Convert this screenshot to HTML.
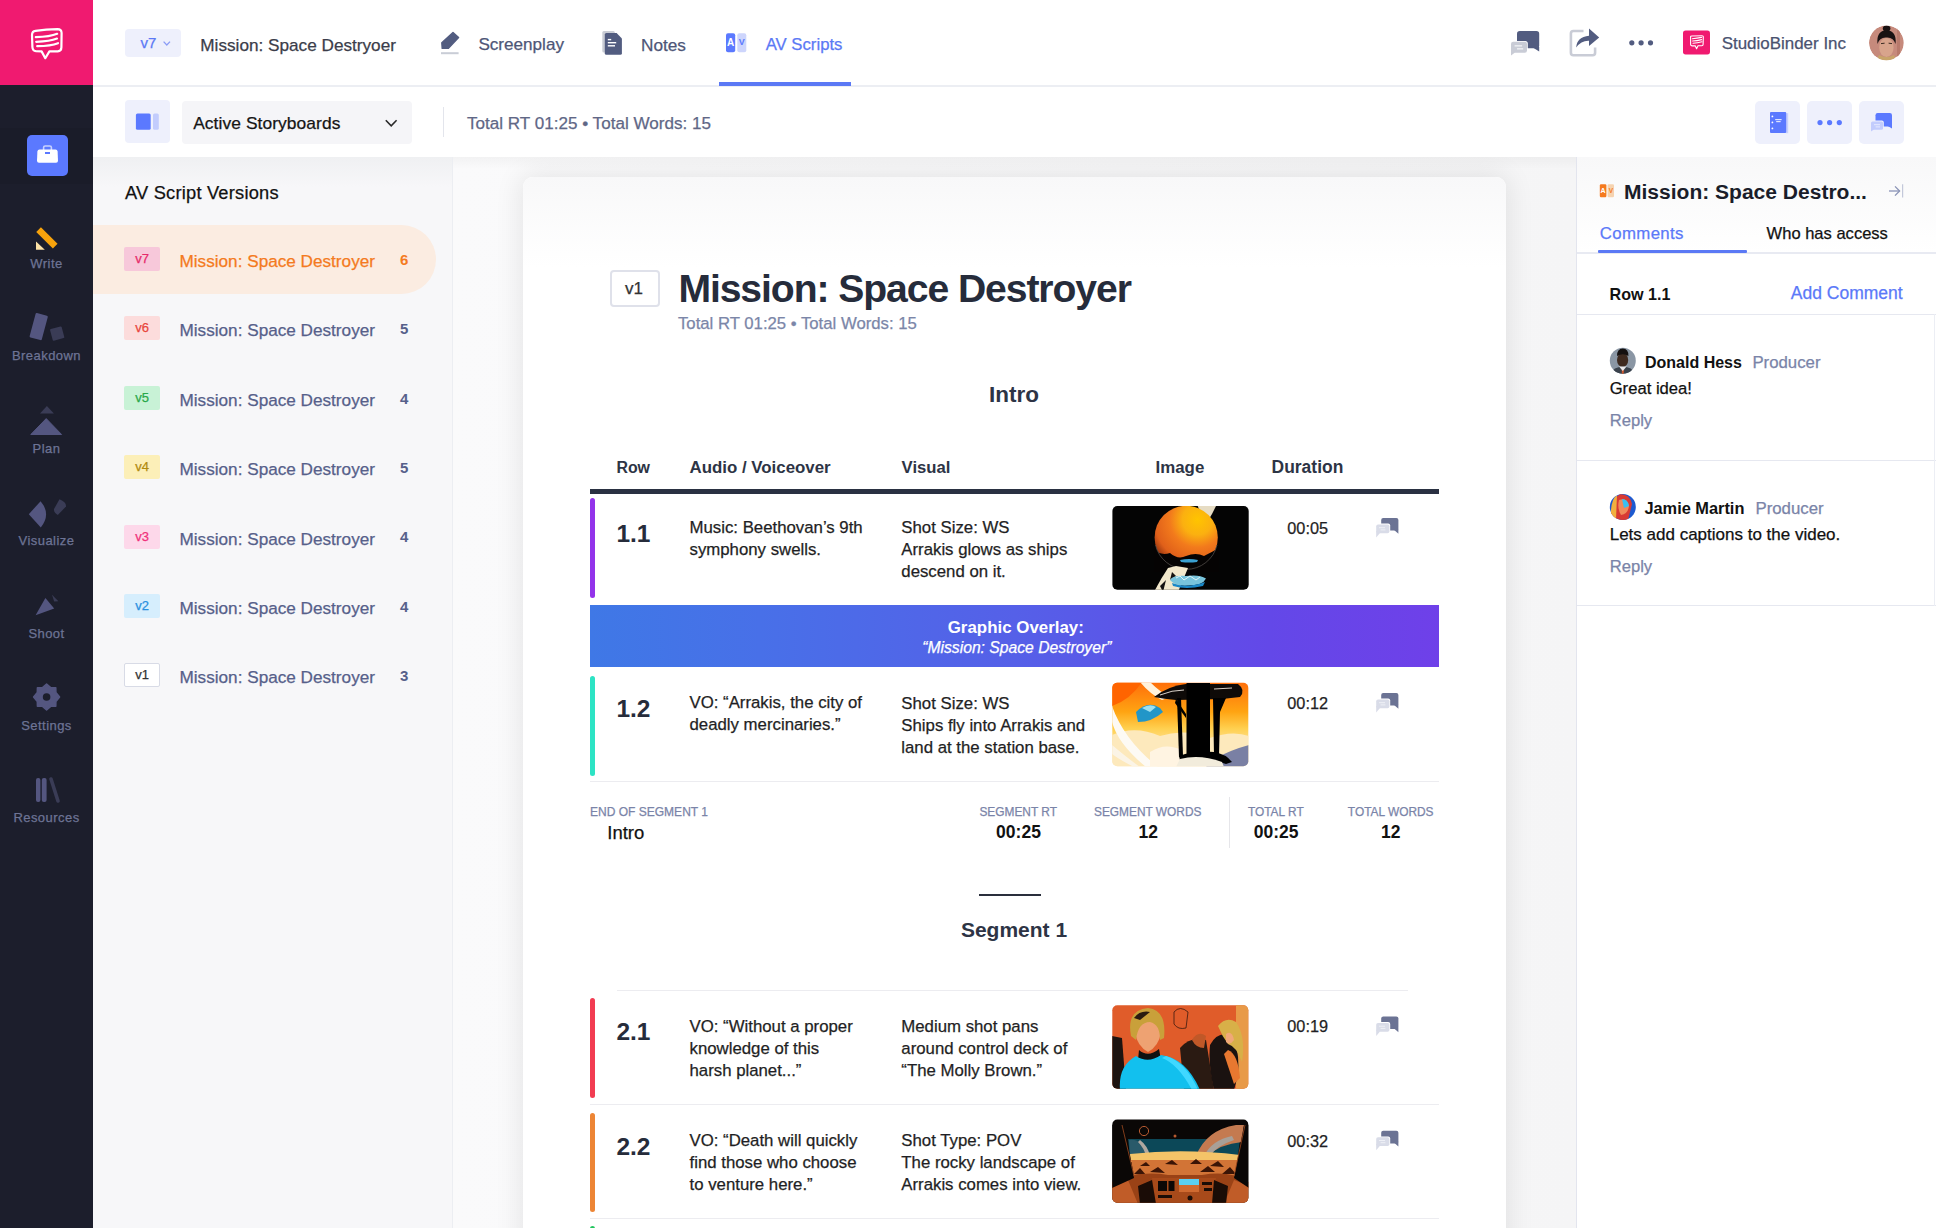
<!DOCTYPE html>
<html><head><meta charset="utf-8"><style>
*{box-sizing:border-box;margin:0;padding:0}
html,body{width:1936px;height:1228px;overflow:hidden;background:#fff}
body{position:relative;font-family:'Liberation Sans',sans-serif}
.t{position:absolute;white-space:pre}
.r{-webkit-text-stroke:0.25px currentColor}
.a{position:absolute}
svg{position:absolute;overflow:visible}

</style></head><body>
<!-- sidebar -->
<div class=a style="left:0;top:0;width:93px;height:1228px;background:#1c1e2c"></div>
<div class=a style="left:0;top:128px;width:93px;height:56px;background:#1a1c29"></div>
<div class=a style="left:0;top:0;width:93px;height:85px;background:#f01a70"></div>
<!-- header / toolbar -->
<div class=a style="left:93px;top:85px;width:1843px;height:2px;background:#eceef3"></div>
<div class=a style="left:719px;top:82px;width:132px;height:4px;background:#5b79f5"></div>
<!-- left panel -->
<div class=a style="left:93px;top:157px;width:359px;height:1071px;background:#f7f7f9"></div>
<div class=a style="left:93px;top:157px;width:359px;height:30px;background:linear-gradient(#eff0f2,rgba(247,247,249,0))"></div>
<div class=a style="left:452px;top:157px;width:1px;height:1071px;background:#eceef2"></div>
<div class=a style="left:93px;top:225px;width:343px;height:69px;background:#fbece1;border-radius:0 34.5px 34.5px 0"></div>
<!-- main area -->
<div class=a style="left:453px;top:157px;width:1123px;height:1071px;background:linear-gradient(90deg,#fafafb,#f5f5f6);overflow:hidden">
<div class=a style="left:70px;top:20px;width:983px;height:1100px;border-radius:10px;box-shadow:0 0 28px 2px rgba(0,0,0,0.09)"></div>
</div>
<div class=a style="left:523px;top:177px;width:983px;height:1100px;background:#fff;border-radius:10px"></div>
<div class=a style="left:523px;top:177px;width:983px;height:90px;border-radius:10px 10px 0 0;background:linear-gradient(#f8f8f9,#fff)"></div>
<div class=a style="left:453px;top:157px;width:1123px;height:12px;background:linear-gradient(rgba(0,0,0,0.03),rgba(0,0,0,0))"></div>
<!-- right panel -->
<div class=a style="left:1576px;top:157px;width:360px;height:1071px;background:#fff;border-left:1px solid #e3e5ee"></div>
<div class=a style="left:1577px;top:157px;width:359px;height:96px;background:linear-gradient(#f8f8f9,#fff)"></div>
<div class=a style="left:1577px;top:252px;width:359px;height:2px;background:#e8eaf2"></div>
<div class=a style="left:1598px;top:250px;width:149px;height:3px;background:#5b79f5;border-radius:1px"></div>
<div class=a style="left:1577px;top:314px;width:359px;height:1px;background:#e6e8f0"></div>
<div class=a style="left:1577px;top:460px;width:359px;height:1px;background:#e6e8f0"></div>
<div class=a style="left:1577px;top:605px;width:359px;height:1px;background:#e6e8f0"></div>
<div class=a style="left:1934px;top:314px;width:1px;height:292px;background:#eceef4"></div>
<!-- toolbar elements -->
<div class=a style="left:125px;top:29px;width:56px;height:28px;background:#eef0fc;border-radius:4px"></div>
<div class=a style="left:125px;top:100px;width:45px;height:43px;background:#eef0fc;border-radius:4px"></div>
<div class=a style="left:182px;top:101px;width:230px;height:43px;background:#f5f5f8;border-radius:4px"></div>
<div class=a style="left:443px;top:107px;width:1px;height:30px;background:#e3e5ec"></div>
<div class=a style="left:1755px;top:101px;width:45px;height:43px;background:#eef0fc;border-radius:5px"></div>
<div class=a style="left:1807px;top:101px;width:45px;height:43px;background:#eef0fc;border-radius:5px"></div>
<div class=a style="left:1859px;top:101px;width:45px;height:43px;background:#eef0fc;border-radius:5px"></div>
<div class=a style="left:27px;top:135px;width:41px;height:41px;background:#5b79ff;border-radius:5px"></div>
<!-- version chips -->
<div class=a style="left:124px;top:247px;width:36px;height:24px;background:#f7c8da;border-radius:2px"></div>
<div class=a style="left:124px;top:316.4px;width:36px;height:24px;background:#fcdcdc;border-radius:2px"></div>
<div class=a style="left:124px;top:385.8px;width:36px;height:24px;background:#c8f2d6;border-radius:2px"></div>
<div class=a style="left:124px;top:455.2px;width:36px;height:24px;background:#fcefb8;border-radius:2px"></div>
<div class=a style="left:124px;top:524.6px;width:36px;height:24px;background:#fdd8ea;border-radius:2px"></div>
<div class=a style="left:124px;top:594px;width:36px;height:24px;background:#d6eefd;border-radius:2px"></div>
<div class=a style="left:124px;top:663.4px;width:36px;height:24px;background:#fff;border:1px solid #d8dbe6;border-radius:2px"></div>
<!-- card content -->
<div class=a style="left:610px;top:269.5px;width:50px;height:37px;background:#fff;border:2px solid #dfe1ea;border-radius:4px"></div>
<div class=a style="left:590px;top:489px;width:849px;height:5px;background:#2a3142"></div>
<div class=a style="left:590px;top:498px;width:5px;height:100px;background:#9333ea;border-radius:3px"></div>
<div class=a style="left:590px;top:605px;width:849px;height:62px;background:linear-gradient(90deg,#3f78e6 0%,#4870e8 20%,#5560e8 50%,#6348e8 80%,#6f40e9 100%)"></div>
<div class=a style="left:590px;top:675.5px;width:5px;height:100px;background:#2de3c4;border-radius:3px"></div>
<div class=a style="left:590px;top:781px;width:849px;height:1px;background:#ececf0"></div>
<div class=a style="left:1228.5px;top:797px;width:1px;height:51px;background:#e6e6ea"></div>
<div class=a style="left:979px;top:894px;width:62px;height:1.5px;background:#2a2f3c"></div>
<div class=a style="left:617px;top:990px;width:791px;height:1px;background:#ececf0"></div>
<div class=a style="left:590px;top:998px;width:5px;height:100px;background:#f23c52;border-radius:3px"></div>
<div class=a style="left:590px;top:1104px;width:849px;height:1px;background:#ececf0"></div>
<div class=a style="left:590px;top:1112.5px;width:5px;height:99px;background:#ed8535;border-radius:3px"></div>
<div class=a style="left:590px;top:1218px;width:849px;height:1px;background:#ececf0"></div>
<div class=a style="left:590px;top:1225.5px;width:5px;height:10px;background:#22c55e;border-radius:3px"></div>
<svg style="left:0;top:0" width="1936" height="1228" viewBox="0 0 1936 1228" font-family="'Liberation Sans', sans-serif">
<defs>
<clipPath id="im1"><rect x="1112.4" y="506" width="136.3" height="83.7" rx="5"/></clipPath>
<clipPath id="im2"><rect x="1112.3" y="682.7" width="136" height="83.5" rx="5"/></clipPath>
<clipPath id="im3"><rect x="1112.3" y="1005.3" width="136" height="83.5" rx="5"/></clipPath>
<clipPath id="im4"><rect x="1112.3" y="1119.5" width="136" height="83.3" rx="5"/></clipPath>
<radialGradient id="planet" cx="0.68" cy="0.22" r="0.8"><stop offset="0" stop-color="#ffc400"/><stop offset="0.3" stop-color="#fbb010"/><stop offset="0.55" stop-color="#f27a1c"/><stop offset="0.85" stop-color="#e0601a"/><stop offset="1" stop-color="#a03a10"/></radialGradient>
<linearGradient id="sky2" x1="0" y1="0" x2="0" y2="1"><stop offset="0" stop-color="#ff6e0a"/><stop offset="0.35" stop-color="#ffa412"/><stop offset="0.55" stop-color="#ffd050"/><stop offset="0.75" stop-color="#ffe3a0"/><stop offset="1" stop-color="#fdeccc"/></linearGradient>
<linearGradient id="land4" x1="0" y1="0" x2="0" y2="1"><stop offset="0" stop-color="#f8c060"/><stop offset="0.3" stop-color="#e89040"/><stop offset="1" stop-color="#b04a18"/></linearGradient>
</defs>
<!-- logo -->
<g fill="none" stroke="#fff" stroke-width="2.2" stroke-linejoin="round" stroke-linecap="round">
<path d="M35.5,30.8 Q46,29.6 57.5,29.2 Q61.5,29.2 61.6,33 L61.4,47.6 Q61.3,51.2 57.8,51.3 L49.4,51.4 L45.3,58.2 L41.6,51.4 L36,51.2 Q32.6,51 32.4,47 L32,35 Q32,31.2 35.5,30.8 Z"/>
<path d="M35.8,37.2 Q50,36.8 57.2,33.8"/><path d="M36.2,41.8 Q50,41.6 57,38.6"/><path d="M37.2,46.2 Q51,46 58,43.2"/>
</g>
<!-- briefcase -->
<path d="M43.6,150 V147.6 Q43.6,146 45.2,146 H49.8 Q51.4,146 51.4,147.6 V150" fill="none" stroke="#c8d2ff" stroke-width="1.6"/>
<path d="M39.5,149.6 H55.5 Q57.4,149.6 57.6,151.6 L58,160.8 Q58,162.8 56,162.8 H39 Q37,162.8 37,160.8 L37.4,151.6 Q37.6,149.6 39.5,149.6 Z" fill="#fff"/>
<rect x="45" y="152" width="5" height="2" fill="#5b79ff"/>
<!-- write -->
<line x1="38.6" y1="229.6" x2="55.2" y2="246.2" stroke="#f7a30c" stroke-width="6.6"/>
<polygon points="36,241.6 36,249.8 44.8,249.8" fill="#fde2a6"/>
<!-- breakdown -->
<g transform="translate(38.7,326.6) rotate(15)"><rect x="-6.3" y="-12.6" width="12.6" height="25.2" rx="1.2" fill="#545680"/></g>
<g transform="translate(57.2,333.6) rotate(-15)"><rect x="-6" y="-6" width="12" height="12" rx="1" fill="#3a3c56"/></g>
<!-- plan -->
<polygon points="40,413.6 46.9,405.9 53.9,413.6" fill="#3a3c56"/>
<polygon points="30.8,434.5 46.2,418.6 61.6,434.5" fill="#545680" stroke="#545680" stroke-width="1" stroke-linejoin="round"/>
<!-- visualize -->
<path d="M28.8,514.2 L40.6,501.2 Q51.5,514 40.8,527.6 Z" fill="#545680"/>
<path d="M54,509 L59.5,499.2 Q66.5,502 66,506.5 L57.8,515 Q53.5,512.5 54,509 Z" fill="#3a3c56"/>
<!-- shoot -->
<polygon points="35.6,615.2 45.4,598 54.2,608.6" fill="#545680"/>
<polygon points="52,594.8 58.4,601.2 54.2,601.4" fill="#3a3c56"/>
<!-- settings -->
<g transform="translate(46.6,697)">
<path fill="#545680" d="M0,-13 L4.4,-9.3 L9.2,-9.2 L9.3,-4.4 L13,0 L9.3,4.4 L9.2,9.2 L4.4,9.3 L0,13 L-4.4,9.3 L-9.2,9.2 L-9.3,4.4 L-13,0 L-9.3,-4.4 L-9.2,-9.2 L-4.4,-9.3 Z" stroke="#545680" stroke-width="1.5" stroke-linejoin="round"/>
<circle r="3.8" fill="#1c1e2c"/>
</g>
<!-- resources -->
<rect x="36" y="778" width="4.4" height="24" rx="2" fill="#545680"/>
<rect x="41.8" y="778" width="4.8" height="24" rx="2" fill="#545680"/>
<line x1="51" y1="779" x2="58" y2="801" stroke="#3a3c56" stroke-width="3.6" stroke-linecap="round"/>
<!-- header: v7 chevron -->
<polyline points="163.6,41.6 166.8,45 170,41.6" fill="none" stroke="#8b9cf6" stroke-width="1.3"/>
<!-- screenplay pencil -->
<polygon points="453,32.4 458.6,37.6 448.2,48.4 442.2,48.4 441.8,42.8" fill="#525c80" stroke="#525c80" stroke-width="1.4" stroke-linejoin="round"/>
<rect x="441" y="52.2" width="17.6" height="2" fill="#c9cdd6"/>
<!-- notes -->
<rect x="602.3" y="31" width="12.5" height="21.5" rx="1.5" fill="#c9ccd4"/>
<path d="M606.4,33 H616.6 L621.9,38.4 V53.2 Q621.9,54.8 620.3,54.8 H606.4 Q604.8,54.8 604.8,53.2 V34.6 Q604.8,33 606.4,33 Z" fill="#525c80"/>
<rect x="607.8" y="38.9" width="3.4" height="1.4" fill="#fff"/><rect x="607.8" y="42" width="8.4" height="1.4" fill="#fff"/><rect x="607.8" y="45.1" width="7.2" height="1.4" fill="#fff"/>
<!-- AV -->
<rect x="726" y="33.3" width="9.2" height="19" rx="2" fill="#5b79ff"/>
<rect x="737.3" y="33.3" width="9" height="19" rx="2" fill="#cdd5fc"/>
<text x="730.6" y="46.4" font-size="10" font-weight="700" fill="#fff" text-anchor="middle">A</text>
<text x="741.8" y="45.4" font-size="9" font-weight="700" fill="#5b79ff" text-anchor="middle">V</text>
<!-- header chat -->
<rect x="1517" y="31" width="22.2" height="17.2" rx="2.8" fill="#525c80"/>
<polygon points="1532,47 1539.2,47 1539.2,51.6" fill="#525c80"/>
<rect x="1510.2" y="40.9" width="17.6" height="12.6" rx="2.6" fill="#fff"/>
<rect x="1511" y="41.7" width="16" height="11" rx="2.2" fill="#c9ccd6"/>
<polygon points="1511,50 1511,55.4 1515,52.6" fill="#c9ccd6"/>
<rect x="1514.6" y="45.2" width="7.5" height="1.3" fill="#f2f3f6"/><rect x="1517" y="48.2" width="6.2" height="1.3" fill="#f2f3f6"/>
<!-- share -->
<path d="M1583.5,31 H1573.4 Q1570.9,31 1570.9,33.5 V52.8 Q1570.9,55.3 1573.4,55.3 H1592.6 Q1595.1,55.3 1595.1,52.8 V47.6" fill="none" stroke="#c9ccd6" stroke-width="2.6"/>
<path d="M1576.2,47.6 Q1576.8,37 1589,35.8 V28.4 L1599.2,37.4 L1589,46 V40.8 Q1581.2,40.4 1576.2,47.6 Z" fill="#525c80"/>
<!-- dots -->
<circle cx="1631.8" cy="42.8" r="2.6" fill="#525c80"/><circle cx="1641.1" cy="42.8" r="2.6" fill="#525c80"/><circle cx="1650.5" cy="42.8" r="2.6" fill="#525c80"/>
<!-- studiobinder logo -->
<rect x="1683" y="30.6" width="27" height="23.8" rx="2.6" fill="#f01a70"/>
<g fill="none" stroke="#fff" stroke-width="1.1" stroke-linejoin="round" stroke-linecap="round">
<path d="M1690.6,37 Q1690.5,36 1691.8,36 L1702,35.8 Q1703.4,35.8 1703.3,37 L1703.1,44.6 Q1703.1,45.8 1701.8,45.8 L1698,45.8 L1696.6,48.8 L1695.2,45.8 L1692,45.9 Q1690.6,45.8 1690.6,44.6 Z"/>
<path d="M1692.4,38.8 Q1697,38.4 1701.6,37.4"/><path d="M1692.6,41 Q1697,41 1701.6,39.6"/><path d="M1693,43.2 Q1697.4,43 1702,41.8"/>
</g>
<!-- avatar -->
<clipPath id="av0"><circle cx="1886.4" cy="42.9" r="17.4"/></clipPath>
<g clip-path="url(#av0)">
<circle cx="1886.4" cy="42.9" r="17.4" fill="#c68a7c"/>
<rect x="1897" y="28" width="3" height="30" fill="#b87a6c"/>
<ellipse cx="1886.4" cy="47.5" rx="7.2" ry="9.5" fill="#d8a48c"/>
<path d="M1877.5,44 Q1876,31 1886.5,30 Q1897,31 1895.5,44 Q1893.5,37 1886.5,37.5 Q1879.5,37 1877.5,44 Z" fill="#1a1212"/>
<ellipse cx="1886.6" cy="28.6" rx="3.8" ry="3" fill="#1a1212"/>
<path d="M1881,43.6 L1884.6,43.2 M1888.6,43.2 L1892,43.6" stroke="#3a2a22" stroke-width="1"/>
<path d="M1879,55 Q1886.4,59 1894,55 L1897,62 L1876,62 Z" fill="#c8a46a"/>
</g>
<!-- toolbar icons -->
<rect x="135.9" y="113.5" width="14.8" height="16.3" rx="1.6" fill="#5b79ff"/>
<rect x="153" y="113.5" width="5.8" height="16.3" rx="1.6" fill="#c2ccfd"/>
<polyline points="385.8,120.2 391.2,125.8 396.6,120.2" fill="none" stroke="#2a2a2a" stroke-width="1.6"/>
<rect x="1786" y="113.2" width="2.2" height="20" fill="#c8d0fd"/>
<rect x="1770" y="112" width="16.2" height="21" rx="1" fill="#5b79ff"/>
<circle cx="1772.4" cy="116.4" r="0.9" fill="#fff"/><circle cx="1772.4" cy="122.4" r="0.9" fill="#fff"/><circle cx="1772.4" cy="128.4" r="0.9" fill="#fff"/>
<rect x="1775.2" y="119" width="6.4" height="1.2" fill="#dfe5ff"/><rect x="1776.2" y="121" width="4.4" height="1.2" fill="#dfe5ff"/>
<circle cx="1820" cy="122.6" r="2.6" fill="#5b79ff"/><circle cx="1829.6" cy="122.6" r="2.6" fill="#5b79ff"/><circle cx="1839.3" cy="122.6" r="2.6" fill="#5b79ff"/>
<rect x="1875.5" y="113" width="16.5" height="13.4" rx="2.2" fill="#5b79ff"/>
<polygon points="1886,125 1892,125 1892,128.6" fill="#5b79ff"/>
<rect x="1870.2" y="120.6" width="13.6" height="10" rx="2" fill="#eef0fc"/>
<rect x="1871" y="121.4" width="12" height="8.4" rx="1.6" fill="#c2ccfd"/>
<polygon points="1871,128 1871,131.6 1874,129.6" fill="#c2ccfd"/>
<rect x="1874" y="124.2" width="6" height="1" fill="#e6eaff"/><rect x="1875.6" y="126.4" width="4.4" height="1" fill="#e6eaff"/>
<!-- row comment icons -->
<g>
<rect x="1381.2" y="518" width="17.2" height="12.6" rx="2" fill="#6b7394"/>
<polygon points="1393,529 1398.4,529 1398.4,533.8" fill="#6b7394"/>
<rect x="1375.4" y="523.6" width="14.8" height="10.4" rx="2" fill="#fff"/>
<rect x="1376.2" y="524.4" width="13.2" height="8.8" rx="1.8" fill="#d9dce8"/>
<polygon points="1376.2,531 1376.2,537.4 1380,533" fill="#d9dce8"/>
<rect x="1379" y="527.2" width="6" height="1" fill="#eef0f6"/><rect x="1380.6" y="529.4" width="4.8" height="1" fill="#eef0f6"/>
</g>
<g transform="translate(0,175)">
<rect x="1381.2" y="518" width="17.2" height="12.6" rx="2" fill="#6b7394"/>
<polygon points="1393,529 1398.4,529 1398.4,533.8" fill="#6b7394"/>
<rect x="1375.4" y="523.6" width="14.8" height="10.4" rx="2" fill="#fff"/>
<rect x="1376.2" y="524.4" width="13.2" height="8.8" rx="1.8" fill="#d9dce8"/>
<polygon points="1376.2,531 1376.2,537.4 1380,533" fill="#d9dce8"/>
<rect x="1379" y="527.2" width="6" height="1" fill="#eef0f6"/><rect x="1380.6" y="529.4" width="4.8" height="1" fill="#eef0f6"/>
</g>
<g transform="translate(0,498.5)">
<rect x="1381.2" y="518" width="17.2" height="12.6" rx="2" fill="#6b7394"/>
<polygon points="1393,529 1398.4,529 1398.4,533.8" fill="#6b7394"/>
<rect x="1375.4" y="523.6" width="14.8" height="10.4" rx="2" fill="#fff"/>
<rect x="1376.2" y="524.4" width="13.2" height="8.8" rx="1.8" fill="#d9dce8"/>
<polygon points="1376.2,531 1376.2,537.4 1380,533" fill="#d9dce8"/>
<rect x="1379" y="527.2" width="6" height="1" fill="#eef0f6"/><rect x="1380.6" y="529.4" width="4.8" height="1" fill="#eef0f6"/>
</g>
<g transform="translate(0,612.8)">
<rect x="1381.2" y="518" width="17.2" height="12.6" rx="2" fill="#6b7394"/>
<polygon points="1393,529 1398.4,529 1398.4,533.8" fill="#6b7394"/>
<rect x="1375.4" y="523.6" width="14.8" height="10.4" rx="2" fill="#fff"/>
<rect x="1376.2" y="524.4" width="13.2" height="8.8" rx="1.8" fill="#d9dce8"/>
<polygon points="1376.2,531 1376.2,537.4 1380,533" fill="#d9dce8"/>
<rect x="1379" y="527.2" width="6" height="1" fill="#eef0f6"/><rect x="1380.6" y="529.4" width="4.8" height="1" fill="#eef0f6"/>
</g>

<!-- right panel AV orange -->
<rect x="1599.8" y="184.2" width="6.6" height="13" rx="1.2" fill="#f57a1f"/>
<rect x="1607.6" y="184.2" width="6.4" height="13" rx="1.2" fill="#f6d3b0"/>
<text x="1603.1" y="193.4" font-size="7" font-weight="700" fill="#fff" text-anchor="middle">A</text>
<text x="1610.8" y="192.6" font-size="6.5" font-weight="700" fill="#f57a1f" text-anchor="middle">V</text>
<!-- collapse arrow -->
<g fill="none" stroke="#8a93b6" stroke-width="1.3">
<line x1="1889" y1="191" x2="1899.6" y2="191"/><polyline points="1895,186.4 1899.6,191 1895,195.6"/>
</g>
<line x1="1902.6" y1="184.2" x2="1902.6" y2="197.6" stroke="#c3c8da" stroke-width="1.2"/>
<!-- avatars -->
<clipPath id="av1"><circle cx="1622.8" cy="360.8" r="13"/></clipPath>
<clipPath id="av2"><circle cx="1622.8" cy="507" r="13"/></clipPath>
<g clip-path="url(#av1)">
<rect x="1609" y="347" width="28" height="28" fill="#8a96a4"/>
<ellipse cx="1622.6" cy="360" rx="5.6" ry="7.2" fill="#3e2a20"/>
<path d="M1617,356 Q1617,348.5 1622.8,348.5 Q1628.6,348.5 1628.4,356 Q1623,352.5 1617,356 Z" fill="#141010"/>
<path d="M1610,376 Q1612,367 1622.8,366.5 Q1633.5,367 1636,376 Z" fill="#3a424c"/>
<polygon points="1621.6,367 1624,367 1623.6,375 1622,375" fill="#d05a30"/>
<polygon points="1619,366.5 1622.8,371 1626.6,366.5" fill="#e8e8ea"/>
</g>
<g clip-path="url(#av2)">
<rect x="1609" y="493" width="28" height="28" fill="#1d5ad0"/>
<path d="M1611,520 Q1610,500 1620,494 Q1630,494 1632,504 L1628,520 Z" fill="#d83a34"/>
<path d="M1619,500 Q1627,497 1629,506 Q1628,514 1621,515 Q1617,508 1619,500 Z" fill="#f08a5a"/>
<path d="M1622,499 Q1628,499 1629,506 L1624,508 Z" fill="#38c0f0"/>
<path d="M1611,510 Q1612,498 1617,495 L1616,520 L1611,520 Z" fill="#f0b040"/>
</g>
<!-- image 1 -->
<g clip-path="url(#im1)">
<rect x="1112" y="505" width="138" height="86" fill="#040404"/>
<path d="M1197,504 L1217,504 L1212,514 L1206,524 L1200,512 Z" fill="#e6dcc4"/>
<circle cx="1186.2" cy="537.4" r="31.6" fill="url(#planet)"/>
<path d="M1154,549 Q1160,556 1170,553 Q1178,560 1186,556 Q1196,552 1204,556 Q1212,552 1219,548 L1219,572 L1154,572 Z" fill="#050303"/>
<path d="M1155.5,545 A31.6,31.6 0 0 0 1217,545" fill="none" stroke="#5a5450" stroke-width="0.7"/>
<path d="M1176,566 L1188,568 L1178,592 L1154,592 Q1160,580 1168,568 Z" fill="#f2e8cc"/>
<path d="M1160,586 L1166,580 L1163,592 Z M1172,572 L1176,576 L1170,580 Z" fill="#141210"/>
<path d="M1170,580 Q1173,575 1186,576 Q1199,574 1206,578.5 Q1203,585.5 1188,585.5 Q1175,586.5 1170,580 Z" fill="#78c4dc"/>
<path d="M1172,583 Q1186,589 1205,582 L1203,586 Q1186,590 1173,586 Z" fill="#1a88c8"/><path d="M1176,578 L1180,576 L1184,580 L1190,576 L1196,580 L1200,577" stroke="#e0f4f8" stroke-width="1" fill="none"/>
<path d="M1180,560 Q1189,558 1198,560 L1197,562 Q1189,563 1181,562 Z" fill="#3aa0d0"/>
</g>
<!-- image 2 -->
<g clip-path="url(#im2)">
<rect x="1112" y="682" width="137" height="85" fill="url(#sky2)"/>
<path d="M1112,682 L1142,682 Q1130,700 1112,706 Z" fill="#ff6400"/>
<path d="M1140,682 L1150,682 Q1160,692 1170,697 L1162,700 Q1150,694 1140,682 Z" fill="#fff2dc"/>
<path d="M1112,735 Q1135,725 1160,736 Q1185,728 1210,738 Q1232,730 1249,736 L1249,767 L1112,767 Z" fill="#fde9bc"/>
<path d="M1112,706 Q1124,740 1158,767 L1146,767 Q1118,744 1112,722 Z" fill="#fdfaf4"/>
<path d="M1112,745 Q1130,760 1140,767 L1134,767 Q1120,760 1112,754 Z" fill="#fbf4e6"/>
<path d="M1150,752 Q1165,742 1182,750 L1182,767 L1150,767 Z" fill="#fff4e2"/>
<path d="M1212,760 Q1230,750 1249,745 L1249,767 L1206,767 Z" fill="#7a80a4"/>
<path d="M1136,712 Q1148,700 1160,708 L1163,712 Q1152,722 1138,722 Z" fill="#2296c8"/>
<path d="M1142,708 Q1150,703 1156,707 L1150,712 Z" fill="#9fe0f0"/>
<path d="M1154,697 Q1168,686 1186,684 L1238,684 Q1246,690 1240,697 L1222,699 L1176,700 Q1164,699 1154,697 Z" fill="#0e0a08"/>
<path d="M1160,695 Q1172,690 1184,690 M1214,689 L1232,688" stroke="#d8d0c8" stroke-width="1" fill="none"/>
<rect x="1186.5" y="683" width="23.5" height="74" fill="#000"/>
<path d="M1177,698 L1181,698 L1183,756 L1179,757 Z" fill="#000"/>
<path d="M1176,699 L1186,714 L1186,718 L1175,703 Z" fill="#000"/>
<path d="M1213,698 L1226,698 L1220,712 L1219,756 L1214,756 Z" fill="#000"/>
<path d="M1179,756 Q1195,750 1214,752 Q1226,754 1232,762 L1226,764 Q1210,758 1180,760 Z" fill="#000"/>
<path d="M1180,759 Q1200,754 1222,762 L1224,767 L1176,767 Z" fill="#f2ecdc"/>
</g>
<!-- image 3 -->
<g clip-path="url(#im3)">
<rect x="1112" y="1005" width="137" height="85" fill="#e05c2a"/>
<rect x="1236" y="1005" width="13" height="85" fill="#e89a48"/>
<path d="M1174,1012 Q1180,1005 1188,1012 L1186,1028 Q1178,1030 1174,1024 Z" fill="none" stroke="#3a1a10" stroke-width="0.8"/>
<path d="M1112,1036 L1122,1038 L1126,1090 L1112,1090 Z" fill="#1e1410"/>
<path d="M1180,1048 Q1190,1036 1206,1040 L1214,1090 L1184,1090 Z" fill="#2a1a12"/>
<path d="M1192,1040 Q1198,1030 1206,1036 L1204,1048 Q1196,1048 1192,1040 Z" fill="#c05828"/>
<path d="M1210,1045 Q1218,1030 1232,1036 Q1240,1050 1238,1075 L1234,1090 L1214,1090 Q1208,1065 1210,1045 Z" fill="#1a1210"/>
<path d="M1218,1026 Q1226,1016 1236,1022 Q1246,1036 1242,1062 Q1236,1046 1228,1044 Q1222,1036 1218,1026 Z" fill="#d8b048"/>
<path d="M1226,1034 Q1232,1030 1234,1040 Q1230,1046 1226,1042 Z" fill="#f0a878"/>
<path d="M1228,1050 Q1238,1054 1240,1078 L1234,1084 Q1228,1066 1224,1054 Z" fill="#e87830"/>
<path d="M1135,1032 Q1134,1014 1148,1012 Q1161,1014 1161,1032 Q1159,1046 1148,1052 Q1137,1046 1135,1032 Z" fill="#eea272"/>
<path d="M1131,1036 Q1126,1010 1148,1008 Q1167,1010 1164,1038 L1160,1040 Q1160,1024 1150,1022 Q1138,1022 1136,1040 Z" fill="#c9a03a"/>
<path d="M1134,1018 Q1140,1010 1150,1012 L1140,1020 Z" fill="#2a1a10"/>
<path d="M1139,1050 Q1148,1058 1159,1049 L1161,1060 Q1150,1066 1138,1060 Z" fill="#111"/>
<path d="M1120,1090 Q1118,1066 1136,1056 Q1148,1064 1161,1055 Q1186,1058 1200,1090 Z" fill="#12c0ee"/>
<path d="M1162,1058 Q1178,1064 1192,1090 L1198,1090 Q1186,1062 1166,1056 Z" fill="#40d8ff"/>
</g>
<!-- image 4 -->
<g clip-path="url(#im4)">
<rect x="1112" y="1119" width="137" height="85" fill="#0a0706"/>
<path d="M1128,1139 L1240,1139 L1238,1156 L1130,1156 Z" fill="#0c4858"/>
<path d="M1129,1140 Q1142,1138 1150,1156 L1130,1156 Z" fill="#2a5a6a"/>
<path d="M1140,1140 Q1148,1146 1150,1156 L1146,1156 Q1144,1148 1138,1142 Z" fill="#b0a8a0"/>
<path d="M1196,1156 Q1206,1130 1236,1125 L1244,1125 L1242,1142 Q1220,1144 1208,1156 Z" fill="#c47a50"/>
<path d="M1204,1156 Q1212,1140 1232,1136 L1234,1140 Q1216,1146 1210,1156 Z" fill="#a8a098"/>
<circle cx="1144" cy="1131" r="4.6" fill="none" stroke="#b85a30" stroke-width="1"/>
<circle cx="1175" cy="1136" r="1.5" fill="#b85a30"/>
<path d="M1130,1154 Q1184,1148 1240,1155 L1238,1162 L1131,1162 Z" fill="#f4c468"/>
<path d="M1131,1160 L1238,1160 L1236,1176 L1134,1176 Z" fill="#d27436"/>
<path d="M1140,1166 L1146,1162 L1150,1166 Z M1165,1164 L1172,1160 L1178,1165 Z M1190,1164 L1196,1159 L1202,1164 Z M1210,1166 L1218,1161 L1224,1167 Z M1150,1172 L1158,1167 L1165,1173 Z M1200,1172 L1208,1166 L1215,1172 Z M1134,1174 L1140,1168 L1146,1175 Z M1222,1174 L1230,1167 L1236,1174 Z" fill="#3a1406"/>
<path d="M1112,1182 Q1140,1170 1168,1175 L1202,1175 Q1230,1170 1249,1182 L1249,1204 L1112,1204 Z" fill="#9a4216"/>
<path d="M1152,1178 L1216,1178 L1212,1204 L1156,1204 Z" fill="#a84a1a"/>
<rect x="1158" y="1181" width="9" height="10" fill="#0e0806"/>
<rect x="1168.5" y="1181" width="6" height="10" fill="#0e0806"/>
<rect x="1179" y="1179" width="20" height="6" fill="#5ad0f2"/>
<rect x="1179" y="1185" width="20" height="7" fill="#d06a30"/>
<rect x="1202" y="1182" width="10" height="3" fill="#1a0c06"/><rect x="1204" y="1188" width="8" height="3" fill="#1a0c06"/>
<rect x="1158" y="1195" width="14" height="3" fill="#1a0c06"/><circle cx="1190" cy="1198" r="2.5" fill="#1a0c06"/>
<path d="M1112,1186 L1128,1180 L1138,1204 L1112,1204 Z" fill="#c05c28"/>
<path d="M1249,1186 L1234,1180 L1224,1204 L1249,1204 Z" fill="#c05c28"/>
<path d="M1138,1186 L1152,1180 L1156,1204 L1140,1204 Z M1228,1186 L1214,1180 L1212,1204 L1226,1204 Z" fill="#1a0c06"/>
<path d="M1112,1125 L1124,1125 L1134,1178 L1112,1188 Z" fill="#0a0706"/>
<path d="M1249,1125 L1244,1125 L1234,1178 L1249,1188 Z" fill="#0a0706"/>
<path d="M1122,1125 L1134,1176 M1245,1125 L1234,1176" stroke="#a04a20" stroke-width="0.8" fill="none"/>
</g>
</svg>

<div class="t r" style="left:140.5px;top:32.80px;font-size:15.00px;line-height:20px;color:#5b79f5">v7</div>
<div class="t r" style="left:200.3px;top:34.45px;font-size:17.18px;line-height:22px;color:#3b3d4a">Mission: Space Destryoer</div>
<div class="t r" style="left:478.4px;top:34.17px;font-size:17.11px;line-height:22px;color:#4e5677">Screenplay</div>
<div class="t r" style="left:641.0px;top:34.13px;font-size:17.23px;line-height:22px;color:#4e5677">Notes</div>
<div class="t r" style="left:765.7px;top:34.31px;font-size:16.72px;line-height:22px;color:#5b79f5">AV Scripts</div>
<div class="t r" style="left:1721.7px;top:32.93px;font-size:16.94px;line-height:22px;color:#4a5270">StudioBinder Inc</div>
<div class="t r" style="left:193.2px;top:112.27px;font-size:17.39px;line-height:23px;color:#151515;letter-spacing:0.079px">Active Storyboards</div>
<div class="t r" style="left:467.0px;top:113.48px;font-size:17.08px;line-height:22px;color:#5f6786">Total RT 01:25 • Total Words: 15</div>
<div class="t r" style="left:125.0px;top:180.87px;font-size:18.26px;line-height:24px;color:#111;letter-spacing:0.22px">AV Script Versions</div>
<div class="t r" style="left:179.5px;top:250.05px;font-size:17.16px;line-height:22px;color:#f47a20">Mission: Space Destroyer</div>
<div class="t" style="left:400.0px;top:249.80px;font-size:15.00px;line-height:20px;color:#f47a20;font-weight:700">6</div>
<div class="t r" style="left:179.5px;top:319.45px;font-size:17.16px;line-height:22px;color:#56608a">Mission: Space Destroyer</div>
<div class="t" style="left:400.0px;top:319.20px;font-size:15.00px;line-height:20px;color:#56608a;font-weight:700">5</div>
<div class="t r" style="left:179.5px;top:388.85px;font-size:17.16px;line-height:22px;color:#56608a">Mission: Space Destroyer</div>
<div class="t" style="left:400.0px;top:388.60px;font-size:15.00px;line-height:20px;color:#56608a;font-weight:700">4</div>
<div class="t r" style="left:179.5px;top:458.25px;font-size:17.16px;line-height:22px;color:#56608a">Mission: Space Destroyer</div>
<div class="t" style="left:400.0px;top:458.00px;font-size:15.00px;line-height:20px;color:#56608a;font-weight:700">5</div>
<div class="t r" style="left:179.5px;top:527.65px;font-size:17.16px;line-height:22px;color:#56608a">Mission: Space Destroyer</div>
<div class="t" style="left:400.0px;top:527.40px;font-size:15.00px;line-height:20px;color:#56608a;font-weight:700">4</div>
<div class="t r" style="left:179.5px;top:597.05px;font-size:17.16px;line-height:22px;color:#56608a">Mission: Space Destroyer</div>
<div class="t" style="left:400.0px;top:596.80px;font-size:15.00px;line-height:20px;color:#56608a;font-weight:700">4</div>
<div class="t r" style="left:179.5px;top:666.45px;font-size:17.16px;line-height:22px;color:#56608a">Mission: Space Destroyer</div>
<div class="t" style="left:400.0px;top:666.20px;font-size:15.00px;line-height:20px;color:#56608a;font-weight:700">3</div>
<div class="t r" style="left:-158.0px;width:600px;text-align:center;top:250.00px;font-size:13.00px;line-height:17px;color:#e62a6a">v7</div>
<div class="t r" style="left:-158.0px;width:600px;text-align:center;top:319.40px;font-size:13.00px;line-height:17px;color:#e8453c">v6</div>
<div class="t r" style="left:-158.0px;width:600px;text-align:center;top:388.80px;font-size:13.00px;line-height:17px;color:#2aa84a">v5</div>
<div class="t r" style="left:-158.0px;width:600px;text-align:center;top:458.20px;font-size:13.00px;line-height:17px;color:#b08a10">v4</div>
<div class="t r" style="left:-158.0px;width:600px;text-align:center;top:527.60px;font-size:13.00px;line-height:17px;color:#f0307a">v3</div>
<div class="t r" style="left:-158.0px;width:600px;text-align:center;top:597.00px;font-size:13.00px;line-height:17px;color:#2a90e0">v2</div>
<div class="t r" style="left:-158.0px;width:600px;text-align:center;top:666.40px;font-size:13.00px;line-height:17px;color:#333">v1</div>
<div class="t r" style="left:-253.5px;width:600px;text-align:center;top:255.00px;font-size:13.00px;line-height:17px;color:#6d7495;letter-spacing:0.45px">Write</div>
<div class="t r" style="left:-253.5px;width:600px;text-align:center;top:347.40px;font-size:13.00px;line-height:17px;color:#6d7495;letter-spacing:0.45px">Breakdown</div>
<div class="t r" style="left:-253.5px;width:600px;text-align:center;top:439.70px;font-size:13.00px;line-height:17px;color:#6d7495;letter-spacing:0.45px">Plan</div>
<div class="t r" style="left:-253.5px;width:600px;text-align:center;top:532.00px;font-size:13.00px;line-height:17px;color:#6d7495;letter-spacing:0.45px">Visualize</div>
<div class="t r" style="left:-253.5px;width:600px;text-align:center;top:624.60px;font-size:13.00px;line-height:17px;color:#6d7495;letter-spacing:0.45px">Shoot</div>
<div class="t r" style="left:-253.5px;width:600px;text-align:center;top:717.00px;font-size:13.00px;line-height:17px;color:#6d7495;letter-spacing:0.45px">Settings</div>
<div class="t r" style="left:-253.5px;width:600px;text-align:center;top:809.00px;font-size:13.00px;line-height:17px;color:#6d7495;letter-spacing:0.45px">Resources</div>
<div class="t r" style="left:625.0px;top:278.20px;font-size:17.04px;line-height:22px;color:#333">v1</div>
<div class="t" style="left:678.4px;top:262.94px;font-size:39.13px;line-height:51px;color:#262c3b;font-weight:700;letter-spacing:-1.08px">Mission: Space Destroyer</div>
<div class="t r" style="left:678.0px;top:313.00px;font-size:16.73px;line-height:22px;color:#7b86a8">Total RT 01:25 • Total Words: 15</div>
<div class="t" style="left:714.0px;width:600px;text-align:center;top:380.20px;font-size:22.50px;line-height:29px;color:#2d3445;font-weight:700">Intro</div>
<div class="t" style="left:616.4px;top:457.38px;font-size:15.92px;line-height:21px;color:#2d3445;font-weight:700">Row</div>
<div class="t" style="left:689.5px;top:456.56px;font-size:16.87px;line-height:22px;color:#2d3445;font-weight:700">Audio / Voiceover</div>
<div class="t" style="left:901.6px;top:456.61px;font-size:16.70px;line-height:22px;color:#2d3445;font-weight:700">Visual</div>
<div class="t" style="left:1155.6px;top:456.56px;font-size:16.85px;line-height:22px;color:#2d3445;font-weight:700">Image</div>
<div class="t" style="left:1271.6px;top:455.86px;font-size:17.44px;line-height:23px;color:#2d3445;font-weight:700">Duration</div>
<div class="t" style="left:616.4px;top:517.81px;font-size:24.50px;line-height:32px;color:#262c3b;font-weight:700">1.1</div>
<div class="t r" style="left:689.5px;top:517.18px;font-size:16.80px;line-height:22px;color:#1f1f24">Music: Beethovan’s 9th</div>
<div class="t r" style="left:689.5px;top:539.18px;font-size:16.80px;line-height:22px;color:#1f1f24">symphony swells.</div>
<div class="t r" style="left:901.3px;top:517.18px;font-size:16.80px;line-height:22px;color:#1f1f24">Shot Size: WS</div>
<div class="t r" style="left:901.3px;top:539.18px;font-size:16.80px;line-height:22px;color:#1f1f24">Arrakis glows as ships</div>
<div class="t r" style="left:901.3px;top:561.18px;font-size:16.80px;line-height:22px;color:#1f1f24">descend on it.</div>
<div class="t r" style="left:1007.7px;width:600px;text-align:center;top:517.85px;font-size:16.30px;line-height:21px;color:#1f1f24">00:05</div>
<div class="t" style="left:616.4px;top:693.21px;font-size:24.50px;line-height:32px;color:#262c3b;font-weight:700">1.2</div>
<div class="t r" style="left:689.5px;top:692.18px;font-size:16.80px;line-height:22px;color:#1f1f24">VO: “Arrakis, the city of</div>
<div class="t r" style="left:689.5px;top:714.18px;font-size:16.80px;line-height:22px;color:#1f1f24">deadly mercinaries.”</div>
<div class="t r" style="left:901.3px;top:693.18px;font-size:16.80px;line-height:22px;color:#1f1f24">Shot Size: WS</div>
<div class="t r" style="left:901.3px;top:715.18px;font-size:16.80px;line-height:22px;color:#1f1f24">Ships fly into Arrakis and</div>
<div class="t r" style="left:901.3px;top:737.18px;font-size:16.80px;line-height:22px;color:#1f1f24">land at the station base.</div>
<div class="t r" style="left:1007.7px;width:600px;text-align:center;top:692.85px;font-size:16.30px;line-height:21px;color:#1f1f24">00:12</div>
<div class="t" style="left:616.4px;top:1016.41px;font-size:24.50px;line-height:32px;color:#262c3b;font-weight:700">2.1</div>
<div class="t r" style="left:689.5px;top:1015.68px;font-size:16.80px;line-height:22px;color:#1f1f24">VO: “Without a proper</div>
<div class="t r" style="left:689.5px;top:1037.68px;font-size:16.80px;line-height:22px;color:#1f1f24">knowledge of this</div>
<div class="t r" style="left:689.5px;top:1059.68px;font-size:16.80px;line-height:22px;color:#1f1f24">harsh planet...”</div>
<div class="t r" style="left:901.3px;top:1015.68px;font-size:16.80px;line-height:22px;color:#1f1f24">Medium shot pans</div>
<div class="t r" style="left:901.3px;top:1037.68px;font-size:16.80px;line-height:22px;color:#1f1f24">around control deck of</div>
<div class="t r" style="left:901.3px;top:1059.68px;font-size:16.80px;line-height:22px;color:#1f1f24">“The Molly Brown.”</div>
<div class="t r" style="left:1007.7px;width:600px;text-align:center;top:1016.35px;font-size:16.30px;line-height:21px;color:#1f1f24">00:19</div>
<div class="t" style="left:616.4px;top:1130.71px;font-size:24.50px;line-height:32px;color:#262c3b;font-weight:700">2.2</div>
<div class="t r" style="left:689.5px;top:1129.98px;font-size:16.80px;line-height:22px;color:#1f1f24">VO: “Death will quickly</div>
<div class="t r" style="left:689.5px;top:1151.98px;font-size:16.80px;line-height:22px;color:#1f1f24">find those who choose</div>
<div class="t r" style="left:689.5px;top:1173.98px;font-size:16.80px;line-height:22px;color:#1f1f24">to venture here.”</div>
<div class="t r" style="left:901.3px;top:1129.98px;font-size:16.80px;line-height:22px;color:#1f1f24">Shot Type: POV</div>
<div class="t r" style="left:901.3px;top:1151.98px;font-size:16.80px;line-height:22px;color:#1f1f24">The rocky landscape of</div>
<div class="t r" style="left:901.3px;top:1173.98px;font-size:16.80px;line-height:22px;color:#1f1f24">Arrakis comes into view.</div>
<div class="t r" style="left:1007.7px;width:600px;text-align:center;top:1130.65px;font-size:16.30px;line-height:21px;color:#1f1f24">00:32</div>
<div class="t" style="left:715.8px;width:600px;text-align:center;top:616.74px;font-size:16.90px;line-height:22px;color:#fff;font-weight:700">Graphic Overlay:</div>
<div class="t r" style="left:716.8px;width:600px;text-align:center;top:638.36px;font-size:15.70px;line-height:20px;color:#fff;font-style:italic">“Mission: Space Destroyer”</div>
<div class="t r" style="left:590.0px;top:803.83px;font-size:12.02px;line-height:16px;color:#7a84a8">END OF SEGMENT 1</div>
<div class="t r" style="left:607.3px;top:820.60px;font-size:18.48px;line-height:24px;color:#111">Intro</div>
<div class="t r" style="left:718.2px;width:600px;text-align:center;top:804.58px;font-size:11.90px;line-height:15px;color:#7a84a8">SEGMENT RT</div>
<div class="t" style="left:718.5px;width:600px;text-align:center;top:821.34px;font-size:17.50px;line-height:23px;color:#111;font-weight:700">00:25</div>
<div class="t r" style="left:847.7px;width:600px;text-align:center;top:804.58px;font-size:11.90px;line-height:15px;color:#7a84a8">SEGMENT WORDS</div>
<div class="t" style="left:848.2px;width:600px;text-align:center;top:821.34px;font-size:17.50px;line-height:23px;color:#111;font-weight:700">12</div>
<div class="t r" style="left:975.8px;width:600px;text-align:center;top:804.58px;font-size:11.90px;line-height:15px;color:#7a84a8">TOTAL RT</div>
<div class="t" style="left:976.2px;width:600px;text-align:center;top:821.34px;font-size:17.50px;line-height:23px;color:#111;font-weight:700">00:25</div>
<div class="t r" style="left:1090.7px;width:600px;text-align:center;top:804.58px;font-size:11.90px;line-height:15px;color:#7a84a8">TOTAL WORDS</div>
<div class="t" style="left:1090.7px;width:600px;text-align:center;top:821.34px;font-size:17.50px;line-height:23px;color:#111;font-weight:700">12</div>
<div class="t" style="left:714.0px;width:600px;text-align:center;top:916.02px;font-size:21.00px;line-height:27px;color:#2d3445;font-weight:700">Segment 1</div>
<div class="t" style="left:1624.0px;top:178.22px;font-size:21.02px;line-height:27px;color:#1a1d2a;font-weight:700">Mission: Space Destro...</div>
<div class="t r" style="left:1599.8px;top:223.17px;font-size:16.81px;line-height:22px;color:#5b79f8;letter-spacing:0.346px">Comments</div>
<div class="t r" style="left:1766.6px;top:223.27px;font-size:16.55px;line-height:22px;color:#111">Who has access</div>
<div class="t" style="left:1609.5px;top:283.71px;font-size:16.14px;line-height:21px;color:#111;font-weight:700">Row 1.1</div>
<div class="t r" style="left:1790.8px;top:282.23px;font-size:17.51px;line-height:23px;color:#5b79f8">Add Comment</div>
<div class="t" style="left:1645.0px;top:351.95px;font-size:16.01px;line-height:21px;color:#111;font-weight:700">Donald Hess</div>
<div class="t r" style="left:1752.4px;top:351.68px;font-size:16.80px;line-height:22px;color:#7a84a8">Producer</div>
<div class="t" style="left:1644.4px;top:498.03px;font-size:16.37px;line-height:21px;color:#111;font-weight:700">Jamie Martin</div>
<div class="t r" style="left:1755.5px;top:497.88px;font-size:16.80px;line-height:22px;color:#7a84a8">Producer</div>
<div class="t r" style="left:1609.7px;top:378.24px;font-size:16.64px;line-height:22px;color:#111">Great idea!</div>
<div class="t r" style="left:1609.7px;top:409.94px;font-size:16.62px;line-height:22px;color:#7a84a8">Reply</div>
<div class="t r" style="left:1609.7px;top:524.11px;font-size:17.00px;line-height:22px;color:#111">Lets add captions to the video.</div>
<div class="t r" style="left:1609.7px;top:556.04px;font-size:16.62px;line-height:22px;color:#7a84a8">Reply</div>
</body></html>
